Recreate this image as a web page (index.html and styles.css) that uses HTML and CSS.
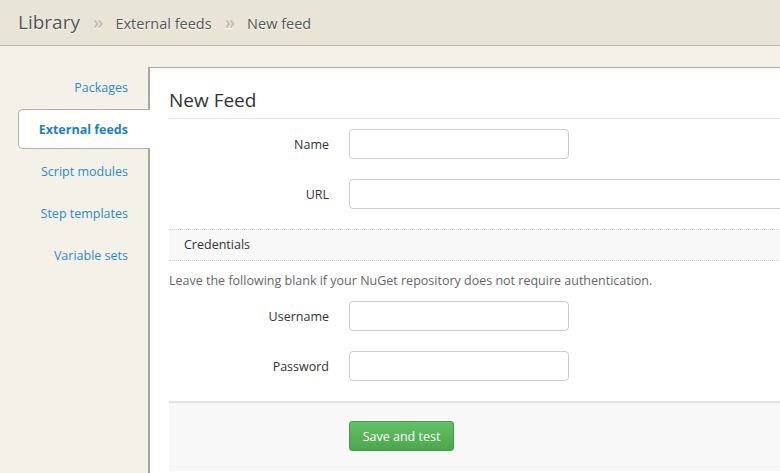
FILE: index.html
```html
<!DOCTYPE html>
<html>
<head>
<meta charset="utf-8">
<link rel="stylesheet" href="styles.css">
</head>
<body>
<header class="topbar">
  <span class="crumb-root">Library</span>
  <span class="sep">&raquo;</span>
  <span class="crumb">External feeds</span>
  <span class="sep">&raquo;</span>
  <span class="crumb">New feed</span>
</header>
<div class="main">
  <nav class="sidebar">
    <a class="nav-item">Packages</a>
    <a class="nav-item active">External feeds</a>
    <a class="nav-item">Script modules</a>
    <a class="nav-item">Step templates</a>
    <a class="nav-item">Variable sets</a>
  </nav>
  <section class="panel">
    <h1 class="title">New Feed</h1>
    <div class="form-row">
      <label class="lbl">Name</label>
      <input class="inp short" type="text">
    </div>
    <div class="form-row">
      <label class="lbl">URL</label>
      <input class="inp wide" type="text">
    </div>
    <div class="section-head">Credentials</div>
    <p class="help">Leave the following blank if your NuGet repository does not require authentication.</p>
    <div class="form-row">
      <label class="lbl">Username</label>
      <input class="inp short" type="text">
    </div>
    <div class="form-row">
      <label class="lbl">Password</label>
      <input class="inp short" type="password">
    </div>
    <div class="footer">
      <button class="btn">Save and test</button>
    </div>
  </section>
</div>
</body>
</html>
```

FILE: styles.css
```css
* { box-sizing: border-box; }
html, body { margin: 0; padding: 0; }
body {
  width: 780px;
  height: 473px;
  overflow: hidden;
  background: #f4f1e9;
  font-family: "Open Sans", "Noto Sans", sans-serif;
  font-size: 12.5px;
  color: #333;
}
.topbar {
  height: 46px;
  background: #e9e5d6;
  border-bottom: 1px solid #bdb9ae;
  display: flex;
  align-items: center;
  padding-left: 18px;
  padding-bottom: 1px;
}
.crumb-root {
  font-size: 19px;
  color: #555;
  text-shadow: 0 1px 0 #fff;
}
.crumb {
  font-size: 14.5px;
  color: #555;
  padding-top: 2px;
  text-shadow: 0 1px 0 #fff;
}
.sep {
  color: #c4c0b3;
  font-size: 17px;
  font-weight: bold;
  text-shadow: 0 1px 0 #fff;
  padding-top: 1px;
  margin: 0 12px 0 13px;
}
.main {
  display: flex;
  padding-top: 21px;
  height: 427px;
}
.sidebar {
  width: 148px;
  flex: none;
  display: flex;
  flex-direction: column;
  align-items: flex-end;
}
.nav-item {
  display: block;
  width: 130px;
  height: 40px;
  line-height: 38px;
  padding: 1px 20px 0 0;
  margin-bottom: 2px;
  text-align: right;
  color: #2e8bcb;
  border: 1px solid transparent;
  border-right: none;
}
.nav-item.active {
  background: #fff;
  border-color: #b4b0a6;
  border-radius: 5px 0 0 5px;
  font-weight: bold;
  color: #1f7fc4;
  margin-right: -2px;
  width: 132px;
  padding-right: 22px;
  position: relative;
  z-index: 1;
}
.panel {
  flex: 1;
  background: #fff;
  border-top: 1px solid #aaa69c;
  border-left: 2px solid #aaa69c;
  padding: 0 0 0 19px;
  display: block;
}
.title {
  margin: 0;
  font-weight: normal;
  font-size: 19px;
  color: #333;
  height: 51px;
  padding-top: 21px;
  line-height: 22px;
  border-bottom: 1px solid #e6e6e6;
}
.form-row {
  display: flex;
  align-items: center;
  height: 50px;
}
.lbl {
  width: 180px;
  text-align: right;
  padding-right: 20px;
  color: #333;
}
.inp {
  height: 30px;
  border: 1px solid #ccc;
  border-radius: 4px;
  background: #fff;
  font-family: inherit;
  margin: 0;
}
.inp.short { width: 220px; }
.inp.wide { width: 460px; }
.section-head {
  margin-top: 10px;
  height: 32px;
  line-height: 30px;
  background: #f8f8f8;
  border-top: 1px dotted #ccc;
  border-bottom: 1px dotted #ccc;
  padding-left: 15px;
  color: #333;
}
.help {
  margin: 0;
  padding-top: 12px;
  height: 30px;
  line-height: 16px;
  color: #666;
}
.footer {
  margin-top: 10px;
  background: #f8f8f8;
  border-top: 2px solid #e3e3e3;
  height: 70px;
  padding: 18px 0 0 180px;
}
.btn {
  display: block;
  height: 30px;
  width: 105px;
  border: 1px solid #4a9a4a;
  border-radius: 3px;
  background: linear-gradient(#62c162, #4ea64e);
  color: #fff;
  font-family: inherit;
  font-size: 12.5px;
  padding: 0;
}
```
